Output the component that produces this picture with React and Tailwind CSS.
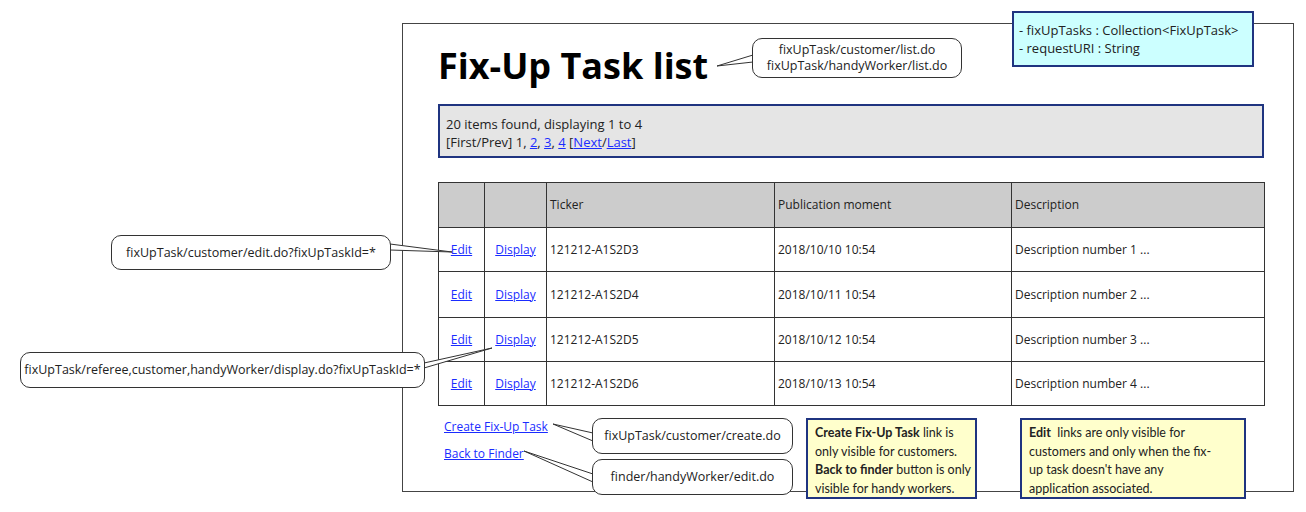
import React from 'react';

const rows = [
  { ticker: '121212-A1S2D3', moment: '2018/10/10 10:54', desc: 'Description number 1 ...' },
  { ticker: '121212-A1S2D4', moment: '2018/10/11 10:54', desc: 'Description number 2 ...' },
  { ticker: '121212-A1S2D5', moment: '2018/10/12 10:54', desc: 'Description number 3 ...' },
  { ticker: '121212-A1S2D6', moment: '2018/10/13 10:54', desc: 'Description number 4 ...' },
];

const font = { fontFamily: '"Comic Sans MS", "Open Sans", "Liberation Sans", sans-serif' };
const noteFont = { fontFamily: 'Lato, "Open Sans", sans-serif' };

function Callout({ className, children }) {
  return (
    <div className={`absolute flex flex-col items-center justify-center rounded-[10px] border border-[#333] bg-white text-[12.5px] leading-[16px] text-[#222] ${className}`}>
      {children}
    </div>
  );
}

function Link({ children }) {
  return <a href="#" className="text-[#1a2cff] underline">{children}</a>;
}

export default function App() {
  return (
    <div className="relative h-[512px] w-[1306px] overflow-hidden bg-white text-[#222]" style={font}>
      {/* main frame */}
      <div className="ml-[402px] mt-[23px] h-[469px] w-[892px] border border-[#444] pl-[35px] pr-[29px]">
        <h1 className="mt-[22px] h-[58px] text-[36px] font-bold leading-[40px] text-black">Fix-Up Task list</h1>

        <div className="h-[54px] border-2 border-[#1f3480] bg-[#e5e5e5] px-[6px] pt-[9px] text-[13px] leading-[18px]">
          <div>20 items found, displaying 1 to 4</div>
          <div>
            [First/Prev] 1, <Link>2</Link>, <Link>3</Link>, <Link>4</Link> [<Link>Next</Link>/<Link>Last</Link>]
          </div>
        </div>

        <table className="mt-[24px] w-[827px] table-fixed border-collapse text-[12px]">
          <colgroup>
            <col className="w-[46px]" />
            <col className="w-[62px]" />
            <col className="w-[228px]" />
            <col className="w-[237px]" />
            <col />
          </colgroup>
          <thead>
            <tr className="h-[45px] bg-[#cccccc]">
              <th className="border border-[#333]" />
              <th className="border border-[#333]" />
              <th className="border border-[#333] pl-[3px] text-left font-normal">Ticker</th>
              <th className="border border-[#333] pl-[3px] text-left font-normal">Publication moment</th>
              <th className="border border-[#333] pl-[3px] text-left font-normal">Description</th>
            </tr>
          </thead>
          <tbody>
            {rows.map((r, i) => (
              <tr key={r.ticker} className={i === 1 ? 'h-[46px]' : 'h-[44px]'}>
                <td className="border border-[#333] text-center"><Link>Edit</Link></td>
                <td className="border border-[#333] text-center"><Link>Display</Link></td>
                <td className="border border-[#333] pl-[3px]">{r.ticker}</td>
                <td className="border border-[#333] pl-[3px]">{r.moment}</td>
                <td className="border border-[#333] pl-[3px]">{r.desc}</td>
              </tr>
            ))}
          </tbody>
        </table>

        <div className="mt-[12px] flex flex-col gap-[9px] pl-[6px] text-[12px] leading-[18px]">
          <div><Link>Create Fix-Up Task</Link></div>
          <div><Link>Back to Finder</Link></div>
        </div>
      </div>

      {/* model box */}
      <div className="absolute left-[1012px] top-[11px] h-[56px] w-[242px] border-2 border-[#1f3480] bg-[#ccffff] px-[5px] pt-[8px] text-[13px] leading-[18px]">
        <div>- fixUpTasks : Collection&lt;FixUpTask&gt;</div>
        <div>- requestURI : String</div>
      </div>

      {/* tails */}
      <svg className="pointer-events-none absolute left-0 top-0" width="1306" height="512">
        <polygon points="753,55 717,66 753,62" fill="white" stroke="#333" strokeWidth="1" />
        <polygon points="390,244 452,252 390,250" fill="white" stroke="#333" strokeWidth="1" />
        <polygon points="424,363 492,348 424,368" fill="white" stroke="#333" strokeWidth="1" />
        <polygon points="593,433 553,424 593,441" fill="white" stroke="#333" strokeWidth="1" />
        <polygon points="593,474 524,451 593,482" fill="white" stroke="#333" strokeWidth="1" />
      </svg>

      <Callout className="left-[752px] top-[38px] h-[40px] w-[210px]">
        <div>fixUpTask/customer/list.do</div>
        <div>fixUpTask/handyWorker/list.do</div>
      </Callout>
      <Callout className="left-[111px] top-[235px] h-[35px] w-[280px]">
        <div>fixUpTask/customer/edit.do?fixUpTaskId=*</div>
      </Callout>
      <Callout className="left-[20px] top-[352px] h-[36px] w-[405px]">
        <div>fixUpTask/referee,customer,handyWorker/display.do?fixUpTaskId=*</div>
      </Callout>
      <Callout className="left-[592px] top-[418px] h-[36px] w-[201px]">
        <div>fixUpTask/customer/create.do</div>
      </Callout>
      <Callout className="left-[592px] top-[459px] h-[36px] w-[201px]">
        <div>finder/handyWorker/edit.do</div>
      </Callout>

      {/* notes */}
      <div className="absolute left-[806px] top-[418px] h-[81px] w-[171px] whitespace-nowrap border-2 border-[#1f3480] bg-[#ffffcc] px-[7px] pt-[4px] text-[12.5px] leading-[18.5px]" style={noteFont}>
        <b>Create Fix-Up Task</b> link is<br />
        only visible for customers.<br />
        <b>Back to finder</b> button is only<br />
        visible for handy workers.
      </div>
      <div className="absolute left-[1020px] top-[418px] h-[81px] w-[226px] whitespace-nowrap border-2 border-[#1f3480] bg-[#ffffcc] px-[7px] pt-[4px] text-[12.5px] leading-[18.5px]" style={noteFont}>
        <b>Edit</b>&nbsp; links are only visible for<br />
        customers and only when the fix-<br />
        up task doesn't have any<br />
        application associated.
      </div>
    </div>
  );
}
